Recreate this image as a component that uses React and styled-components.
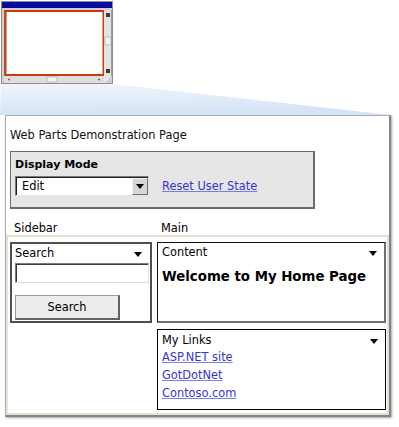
import React from "react";
import styled, { createGlobalStyle } from "styled-components";

const GlobalStyle = createGlobalStyle`
  html, body {
    margin: 0;
    padding: 0;
    background: #fff;
  }
  body {
    font-family: "DejaVu Sans", Verdana, sans-serif;
    font-size: 11.4px;
    color: #000;
  }
`;

const Stage = styled.div`
  width: 399px;
  height: 427px;
  overflow: hidden;
`;

const Sketch = styled.svg`
  display: block;
`;

const Page = styled.div`
  margin-left: 5px;
  width: 386px;
  height: 302px;
  box-sizing: border-box;
  border: 1px solid #ababab;
  border-right: 2px solid #858585;
  border-bottom: 2px solid #858585;
  box-shadow: 1px 1px 2px rgba(0, 0, 0, 0.35);
  padding-top: 12px;
  background: #fff;
`;

const PageTitle = styled.div`
  margin-left: 4px;
  line-height: 14px;
  color: #111;
`;

const ModePanel = styled.div`
  margin: 9px 0 0 4px;
  width: 305px;
  height: 58px;
  box-sizing: border-box;
  background: #e6e6e6;
  border: 1px solid #6b6b6b;
  border-right-width: 2px;
  border-bottom-width: 2px;
  padding: 6px 0 0 4px;
`;

const ModeLabel = styled.div`
  font-weight: bold;
  font-size: 11px;
  line-height: 14px;
`;

const ModeRow = styled.div`
  display: flex;
  align-items: center;
  gap: 13px;
  margin-top: 4px;
`;

const Select = styled.div`
  display: flex;
  width: 134px;
  height: 20px;
  box-sizing: border-box;
  background: #fff;
  border: 1px solid;
  border-color: #7a7a7a #e4e4e4 #e4e4e4 #7a7a7a;
  box-shadow: inset 1px 1px 0 #1e1e1e;
`;

const SelectValue = styled.span`
  flex: 1;
  padding-left: 6px;
  line-height: 19px;
`;

const SelectButton = styled.span`
  width: 16px;
  margin: 1px 0 0;
  box-sizing: border-box;
  background: #d6d6d6;
  border: 1px solid;
  border-color: #f4f4f4 #6e6e6e #6e6e6e #f4f4f4;
  display: flex;
  align-items: center;
  justify-content: center;
`;

const Caret = styled.span`
  width: 0;
  height: 0;
  border-left: 4.5px solid transparent;
  border-right: 4.5px solid transparent;
  border-top: ${(p) => p.$h || 5}px solid #000;
  margin: ${(p) => p.$m || "0"};
`;

const TextLink = styled.a`
  color: #3434d6;
  text-decoration: underline;
  text-decoration-color: #7d7de6;
  line-height: ${(p) => p.$lh || 14}px;
  cursor: pointer;
`;

const ZoneLabels = styled.div`
  display: grid;
  grid-template-columns: 142px 229px;
  column-gap: 5px;
  margin: 12px 0 0 4px;
  line-height: 14px;
`;

const ZoneLabel = styled.span`
  padding-left: 4px;
`;

const Zones = styled.div`
  height: 180px;
  box-sizing: border-box;
  border: 2px solid #e3e2d3;
  padding: 5px 1px 3px 2px;
  display: grid;
  grid-template-columns: 142px 229px;
  column-gap: 5px;
  align-items: start;
`;

const Column = styled.div`
  display: flex;
  flex-direction: column;
  gap: 6px;
`;

const parts = {
  heavy: `
    border: 2px solid #4f4f4f;
    padding: 2px 1px 0 3px;
  `,
  raised: `
    border: 1px solid #111;
    border-right: 2px solid #6f6f6f;
    border-bottom: 2px solid #6f6f6f;
    padding: 2px 0 0 4px;
  `,
  plain: `
    border: 1px solid #000;
    padding: 3px 0 0 4px;
  `,
};

const Part = styled.div`
  height: 81px;
  box-sizing: border-box;
  background: #fff;
  ${(p) => parts[p.$kind]}
`;

const PartHeader = styled.div`
  display: flex;
  justify-content: space-between;
  align-items: flex-start;
  line-height: 14px;
`;

const SearchInput = styled.input`
  display: block;
  width: 134px;
  height: 20px;
  box-sizing: border-box;
  margin: 3px 0 0;
  padding: 0 3px;
  font: inherit;
  background: #fff;
  border: 1px solid;
  border-color: #7c7c7c #dcdcdc #dcdcdc #7c7c7c;
  box-shadow: inset 1px 1px 0 #3a3a3a;
  outline: none;
`;

const SearchButton = styled.button`
  display: block;
  width: 105px;
  height: 25px;
  box-sizing: border-box;
  margin-top: 12px;
  padding: 0;
  font: inherit;
  color: #000;
  background: #ececec;
  border: 1px solid #9a9a9a;
  border-right: 2px solid #626262;
  border-bottom: 2px solid #626262;
`;

const Welcome = styled.div`
  margin-top: 10px;
  font-weight: bold;
  font-size: 13.33px;
  line-height: 16px;
`;

const LinkList = styled.div`
  display: flex;
  flex-direction: column;
  align-items: flex-start;
  margin-top: 1px;
`;

function MiniWindow() {
  return (
    <Sketch width="399" height="84" viewBox="0 0 399 84">
      <rect x="1.5" y="1.5" width="111" height="82" fill="#cfcfcf" stroke="#8f8f8f" />
      <rect x="2" y="2" width="110" height="6" fill="#06089e" />
      <rect x="4" y="10" width="100" height="66" fill="#7d7d7d" />
      <rect x="5.5" y="11" width="98" height="64" fill="#fff" stroke="#cc3a0c" strokeWidth="2" />
      <rect x="104" y="10" width="8" height="66" fill="#e3e3e3" />
      <rect x="111" y="10" width="1" height="66" fill="#9a9a9a" />
      <rect x="106" y="13" width="4" height="4" fill="#3a3a3a" />
      <rect x="105" y="37" width="6" height="8" fill="#f2f2f2" stroke="#a0a0a0" strokeWidth="0.6" />
      <rect x="106" y="69" width="4" height="4" fill="#3a3a3a" />
      <rect x="4" y="76" width="100" height="7" fill="#dedede" />
      <path d="M10 79.5 L8 79.5 M9 78.5 L9 80.5" stroke="#555" strokeWidth="0.8" />
      <rect x="47" y="77" width="10" height="5" fill="#f2f2f2" stroke="#a0a0a0" strokeWidth="0.6" />
      <path d="M98 79.5 L100 79.5 M99 78.5 L99 80.5" stroke="#555" strokeWidth="0.8" />
      <rect x="104" y="76" width="8" height="7" fill="#e6e6e6" />
      <path d="M106 83 L112 77 M108.5 83 L112 79.5 M110.5 83 L112 81.5" stroke="#9c9c9c" strokeWidth="0.8" />
    </Sketch>
  );
}

function Lens() {
  return (
    <Sketch width="399" height="31" viewBox="0 0 399 31">
      <defs>
        <linearGradient id="lens" x1="0" y1="0" x2="0.15" y2="1">
          <stop offset="0" stopColor="#f0f5fc" />
          <stop offset="1" stopColor="#d5e3f6" />
        </linearGradient>
      </defs>
      <polygon points="1,0 113,0 391,31 0,31" fill="url(#lens)" />
    </Sketch>
  );
}

function PartTitle({ children }) {
  return (
    <PartHeader>
      <span>{children}</span>
      <Caret $h={5} $m="6px 7px 0 0" />
    </PartHeader>
  );
}

export default function App() {
  return (
    <Stage>
      <GlobalStyle />
      <MiniWindow />
      <Lens />
      <Page>
        <PageTitle>Web Parts Demonstration Page</PageTitle>
        <ModePanel>
          <ModeLabel>Display Mode</ModeLabel>
          <ModeRow>
            <Select>
              <SelectValue>Edit</SelectValue>
              <SelectButton>
                <Caret $h={5} />
              </SelectButton>
            </Select>
            <TextLink>Reset User State</TextLink>
          </ModeRow>
        </ModePanel>
        <ZoneLabels>
          <ZoneLabel>Sidebar</ZoneLabel>
          <ZoneLabel>Main</ZoneLabel>
        </ZoneLabels>
        <Zones>
          <Column>
            <Part $kind="heavy">
              <PartTitle>Search</PartTitle>
              <SearchInput type="text" />
              <SearchButton>Search</SearchButton>
            </Part>
          </Column>
          <Column>
            <Part $kind="raised">
              <PartTitle>Content</PartTitle>
              <Welcome>Welcome to My Home Page</Welcome>
            </Part>
            <Part $kind="plain">
              <PartTitle>My Links</PartTitle>
              <LinkList>
                <TextLink $lh={18}>ASP.NET site</TextLink>
                <TextLink $lh={18}>GotDotNet</TextLink>
                <TextLink $lh={18}>Contoso.com</TextLink>
              </LinkList>
            </Part>
          </Column>
        </Zones>
      </Page>
    </Stage>
  );
}
